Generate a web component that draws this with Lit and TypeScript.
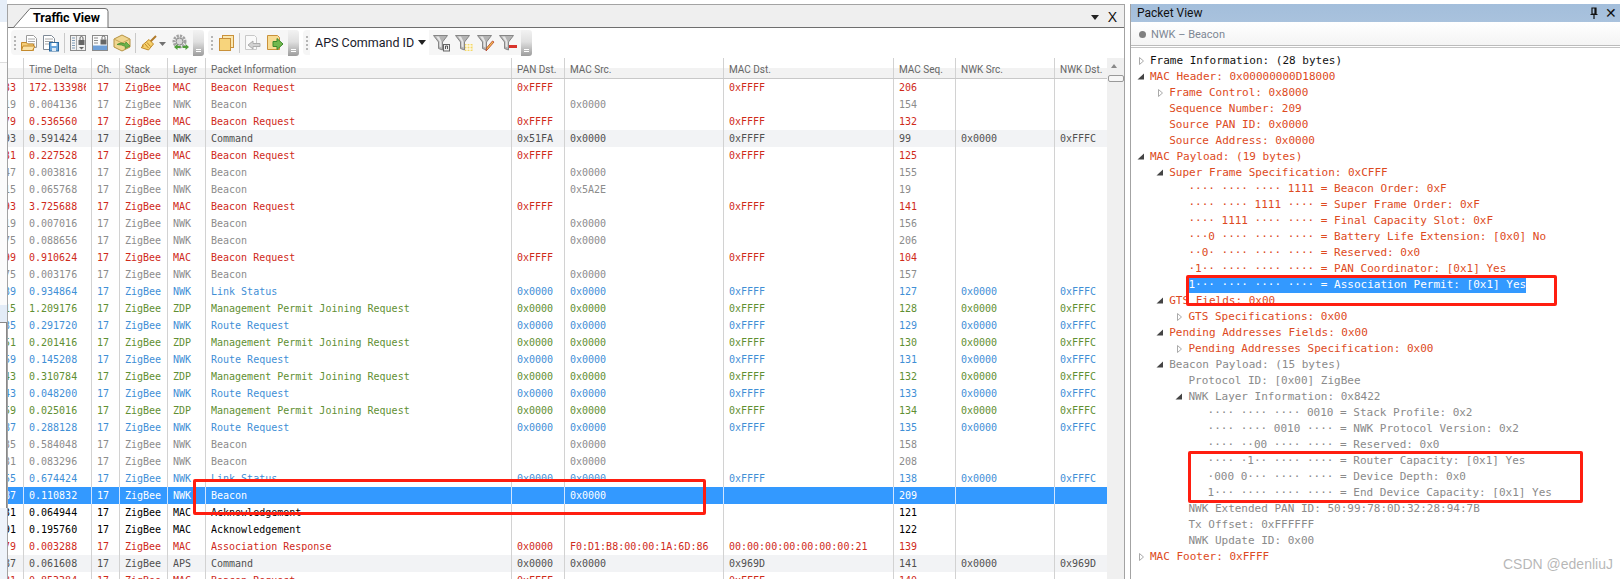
import { LitElement, html, css, svg } from "lit";
import { customElement } from "lit/decorators.js";

type Row = [string, string, string, string, string, string, string, string, string, string, string];

const BR = (n: string, t: string, seq: string): Row => [n, t, "MAC", "Beacon Request", "0xFFFF", "", "0xFFFF", seq, "", "", "r"];
const BC = (n: string, t: string, src: string, seq: string, k = "g"): Row => [n, t, "NWK", "Beacon", "", src, "", seq, "", "", k];
const NW = (n: string, t: string, info: string, seq: string): Row => [n, t, "NWK", info, "0x0000", "0x0000", "0xFFFF", seq, "0x0000", "0xFFFC", "b"];
const ZD = (n: string, t: string, seq: string): Row => [n, t, "ZDP", "Management Permit Joining Request", "0x0000", "0x0000", "0xFFFF", seq, "0x0000", "0xFFFC", "z"];
const AK = (n: string, t: string, seq: string): Row => [n, t, "MAC", "Acknowledgement", "", "", "", seq, "", "", "k"];

const ROWS: Row[] = [
  BR("33", "172.133986", "206"),
  BC("19", "0.004136", "0x0000", "154"),
  BR("79", "0.536560", "132"),
  ["93", "0.591424", "NWK", "Command", "0x51FA", "0x0000", "0xFFFF", "99", "0x0000", "0xFFFC", "d"],
  BR("31", "0.227528", "125"),
  BC("47", "0.003816", "0x0000", "155"),
  BC("15", "0.065768", "0x5A2E", "19"),
  BR("93", "3.725688", "141"),
  BC("19", "0.007016", "0x0000", "156"),
  BC("75", "0.088656", "0x0000", "206"),
  BR("99", "0.910624", "104"),
  BC("75", "0.003176", "0x0000", "157"),
  NW("39", "0.934864", "Link Status", "127"),
  ZD("15", "1.209176", "128"),
  NW("35", "0.291720", "Route Request", "129"),
  ZD("51", "0.201416", "130"),
  NW("59", "0.145208", "Route Request", "131"),
  ZD("43", "0.310784", "132"),
  NW("43", "0.048200", "Route Request", "133"),
  ZD("59", "0.025016", "134"),
  NW("87", "0.288128", "Route Request", "135"),
  BC("35", "0.584048", "0x0000", "158"),
  BC("31", "0.083296", "0x0000", "208"),
  NW("55", "0.674424", "Link Status", "138"),
  BC("87", "0.110832", "0x0000", "209", "s"),
  AK("31", "0.064944", "121"),
  AK("91", "0.195760", "122"),
  ["79", "0.003288", "MAC", "Association Response", "0x0000", "F0:D1:B8:00:00:1A:6D:86", "00:00:00:00:00:00:00:21", "139", "", "", "r"],
  ["87", "0.061608", "APS", "Command", "0x0000", "0x0000", "0x969D", "141", "0x0000", "0x969D", "d"],
  BR("81", "0.853384", "140"),
];

const HEAD = ["", "Time Delta", "Ch.", "Stack", "Layer", "Packet Information", "PAN Dst.", "MAC Src.", "MAC Dst.", "MAC Seq.", "NWK Src.", "NWK Dst."];

// [depth, expander (""|"c"|"e"), colour class, text]
type Line = [number, string, string, string];
const D = "\u00b7\u00b7\u00b7\u00b7";
const TREE: Line[] = [
  [0, "c", "k", "Frame Information: (28 bytes)"],
  [0, "e", "r", "MAC Header: 0x00000000D18000"],
  [1, "c", "r", "Frame Control: 0x8000"],
  [1, "", "r", "Sequence Number: 209"],
  [1, "", "r", "Source PAN ID: 0x0000"],
  [1, "", "r", "Source Address: 0x0000"],
  [0, "e", "r", "MAC Payload: (19 bytes)"],
  [1, "e", "r", "Super Frame Specification: 0xCFFF"],
  [2, "", "r", `${D} ${D} ${D} 1111 = Beacon Order: 0xF`],
  [2, "", "r", `${D} ${D} 1111 ${D} = Super Frame Order: 0xF`],
  [2, "", "r", `${D} 1111 ${D} ${D} = Final Capacity Slot: 0xF`],
  [2, "", "r", `\u00b7\u00b7\u00b70 ${D} ${D} ${D} = Battery Life Extension: [0x0] No`],
  [2, "", "r", `\u00b7\u00b70\u00b7 ${D} ${D} ${D} = Reserved: 0x0`],
  [2, "", "r", `\u00b71\u00b7\u00b7 ${D} ${D} ${D} = PAN Coordinator: [0x1] Yes`],
  [2, "", "s", `1\u00b7\u00b7\u00b7 ${D} ${D} ${D} = Association Permit: [0x1] Yes`],
  [1, "e", "r", "GTS Fields: 0x00"],
  [2, "c", "r", "GTS Specifications: 0x00"],
  [1, "e", "r", "Pending Addresses Fields: 0x00"],
  [2, "c", "r", "Pending Addresses Specification: 0x00"],
  [1, "e", "g", "Beacon Payload: (15 bytes)"],
  [2, "", "g", "Protocol ID: [0x00] ZigBee"],
  [2, "e", "g", "NWK Layer Information: 0x8422"],
  [3, "", "g", `${D} ${D} ${D} 0010 = Stack Profile: 0x2`],
  [3, "", "g", `${D} ${D} 0010 ${D} = NWK Protocol Version: 0x2`],
  [3, "", "g", `${D} \u00b7\u00b700 ${D} ${D} = Reserved: 0x0`],
  [3, "", "g", `${D} \u00b71\u00b7\u00b7 ${D} ${D} = Router Capacity: [0x1] Yes`],
  [3, "", "g", `\u00b7000 0\u00b7\u00b7\u00b7 ${D} ${D} = Device Depth: 0x0`],
  [3, "", "g", `1\u00b7\u00b7\u00b7 ${D} ${D} ${D} = End Device Capacity: [0x1] Yes`],
  [2, "", "g", "NWK Extended PAN ID: 50:99:78:0D:32:28:94:7B"],
  [2, "", "g", "Tx Offset: 0xFFFFFF"],
  [2, "", "g", "NWK Update ID: 0x00"],
  [0, "c", "r", "MAC Footer: 0xFFFF"],
];

const icon = (body: unknown, w = 18) =>
  html`<svg class="ic" width=${w} height="18" viewBox="0 0 ${w} 18">${body}</svg>`;

const doc = (x: number, y: number, w: number, h: number, c = "#8a8a8a") => svg`
  <path d="M${x + 0.5} ${y + 0.5}h${w - 4}l3 3v${h - 3}h-${w - 1}z" fill="#fff" stroke=${c}/>
  <path d="M${x + 2} ${y + 4}h${w - 4}M${x + 2} ${y + 6.5}h${w - 4}M${x + 2} ${y + 9}h${w - 4}" stroke="#a8a8a8"/>`;

const lock = (x: number, y: number) => svg`
  <rect x=${x} y=${y + 4} width="6" height="5" fill="#666"/>
  <path d="M${x + 1.5} ${y + 4}v-2a1.5 1.5 0 0 1 3 0v2" fill="none" stroke="#666"/>`;

const funnelBody = svg`<path d="M0.5 1.5h14l-5 6.5v8l-4-1.5v-6.5z" fill="#b4b4b4" stroke="#868686"/><path d="M3 2.5h3l2.5 5v6l-2-1v-5z" fill="#e6e6e6"/>`;

const ICONS = {
  open: icon(svg`${doc(6, 1, 11, 12, "#9a9a9a")}
    <path d="M1.5 8.5h5l1 1.5h6v6.5h-12z" fill="#f4cd78" stroke="#c48a2c"/>
    <path d="M1.5 16.5l1.5-4.5h12l-2.5 4.5z" fill="#fbe2a6" stroke="#c48a2c"/>`),
  save: icon(svg`${doc(1, 1, 12, 14, "#7f8a96")}
    <rect x="7.5" y="8.5" width="9" height="8.5" fill="#6aa6dc" stroke="#2e6a9f"/>
    <rect x="9.5" y="9" width="5" height="3" fill="#fff"/>
    <rect x="10" y="14" width="4" height="3" fill="#dbe8f4"/>`),
  cols: icon(svg`<rect x="1.5" y="1.5" width="15" height="15" fill="#f2f2f2" stroke="#8a8a8a"/>
    <path d="M3 4h3M3 6.5h3M3 9h3M3 11.5h3M3 14h3" stroke="#7f9ab5"/>
    <path d="M7.5 2v14" stroke="#aaa"/><path d="M10 13h5l-2.5 2.5z" fill="#666"/>${lock(9.5, 2)}`),
  head: icon(svg`<rect x="1.5" y="1.5" width="15" height="15" fill="#fbfbfb" stroke="#8a8a8a"/>
    <path d="M3 4h4M3 6.5h4M3 9h4" stroke="#8a8a8a"/>
    <rect x="2" y="11.5" width="14" height="4.5" fill="#6e9fd8"/>${lock(9.5, 1.5)}`),
  pkg: icon(svg`<path d="M9 1l8 4v8l-8 4-8-4v-8z" fill="#f0d690" stroke="#b59243"/>
    <path d="M1 5l8 4 8-4" fill="none" stroke="#c9a658"/>
    <path d="M4 10.5q4-3 8-.5l1-2 4 4-5 2.5 .5-2q-4-2-8-2z" fill="#6cb24a" stroke="#3c8a2c" stroke-width=".7"/>`),
  brush: icon(svg`<path d="M16 2L10 8" stroke="#b07a2a" stroke-width="2"/>
    <path d="M9 5.5l4.5 4.5-5 6-7.5-2.5 2.5-1.5-1.5-.5z" fill="#f5cf6a" stroke="#c08a2a"/>
    <path d="M5 10l3.5 4M7 8.5l3.5 4" stroke="#c08a2a"/>
    <path d="M19 8h7l-3.5 4z" fill="#707070"/>`, 27),
  gear: icon(svg`<circle cx="8.5" cy="7.5" r="5.5" fill="none" stroke="#a2a2a2" stroke-width="3" stroke-dasharray="2.2 1"/>
    <circle cx="8.5" cy="7.5" r="3.5" fill="#d8d8d8" stroke="#8a8a8a"/>
    <path d="M3 13l3.5-3v2h3v2h-3v2z" fill="#4e9e3a"/>
    <path d="M18 13l-3.5-3v2h-3v2h3v2z" fill="#4e9e3a"/>`),
  copy: icon(svg`<rect x="5.5" y="1.5" width="11" height="12" fill="#fbe7b0" stroke="#c9913a"/>
    <rect x="2.5" y="4.5" width="11" height="12" fill="#f7d47c" stroke="#c9913a"/>`),
  back: icon(svg`<path d="M1.5 1.5h9l2 2v12h-11z" fill="#fafafa" stroke="#c8c8c8"/><path d="M4 11l5-4v2.5h7v3h-7v2.5z" fill="#d2d2d2" stroke="#acacac"/>`),
  next: icon(svg`<path d="M1.5 1.5h10l2 2v12h-12z" fill="#f8dc93" stroke="#c9913a"/>
    <path d="M7 7.5h4v-3l6 5.5-6 5.5v-3h-4z" fill="#72b84e" stroke="#3c8a2c"/>`),
  f1: icon(svg`${funnelBody}<rect x="10.5" y="10.5" width="6" height="6.5" fill="#eee" stroke="#666"/><path d="M12.5 15v-3h2v3" fill="none" stroke="#555"/>`),
  f2: icon(svg`${funnelBody}<rect x="10" y="10" width="7.5" height="7" fill="#f4d867"/><path d="M10 12h7.5M10 15h7.5M12 10v7M15 10v7" stroke="#fff"/>`),
  f3: icon(svg`${funnelBody}<path d="M17 8l-6 7-2 2 .5-3 6-7z" fill="#f2c14e" stroke="#b23b2a" stroke-width=".8"/>`),
  f4: icon(svg`${funnelBody}<rect x="10" y="11" width="8" height="3" fill="#d8342c"/>`),
};

const over = html`<div class="over"><i></i></div>`;

@customElement("app-root")
export class AppRoot extends LitElement {
  static styles = css`
    :host {
      display: block;
      position: relative;
      width: 1620px;
      height: 579px;
      overflow: hidden;
      background: #fff;
      font-family: Roboto, "Noto Sans", sans-serif;
    }
    .page { display: flex; height: 579px; }

    .side { width: 7px; display: flex; flex-direction: column; flex: none; }
    .side div { flex: none; }
    .s1 { height: 22px; background: #e6eef8; }
    .s2 { height: 40px; background: #fff; border-bottom: 1px solid #ddd; }
    .s3 { height: 242px; background: #fbfbfb; }
    .s4 { height: 17px; background: #e3ecf7; }
    .s5 { height: 186px; background: #fff; border-top: 1px solid #888; border-right: 1px solid #888; box-sizing: border-box; }
    .s6 { flex: 1 !important; background: #eef3fa; }

    .traffic {
      width: 1118px; flex: none; margin-top: 4px; box-sizing: border-box;
      border-top: 1px solid #a3a3a3; border-left: 1px solid #a3a3a3; border-right: 1px solid #a3a3a3;
      display: flex; flex-direction: column; overflow: hidden; height: 575px;
    }
    .tabbar {
      height: 23px; flex: none; box-sizing: border-box; background: #efefef;
      border-bottom: 1px solid #6e6e6e; display: flex; align-items: flex-end; position: relative;
    }
    .tab {
      position: relative; margin-left: 5px; margin-bottom: -1px; width: 96px; height: 20px;
      box-sizing: border-box; padding-left: 20px; font-weight: 700; font-size: 12.5px; line-height: 19px; color: #000;
    }
    .tab svg { position: absolute; left: 0; top: 0; }
    .tab span { position: relative; }
    .winbtns { position: absolute; right: 7px; top: 2px; display: flex; gap: 9px; align-items: center; height: 20px; }
    .drop { width: 0; height: 0; flex: none; border-left: 4px solid transparent; border-right: 4px solid transparent; border-top: 5px solid #222; }
    .x { font-family: "Liberation Sans", sans-serif; font-size: 14px; color: #111; line-height: 20px; }

    .toolbar { height: 30px; flex: none; display: flex; gap: 4px; padding: 2px 0 0 3px; box-sizing: border-box; background: #fff; }
    .grp { display: flex; height: 26px; }
    .inner {
      display: flex; align-items: center; gap: 4px; padding: 0 4px 0 3px;
      background: #f6f6f6; border-radius: 4px 0 0 4px; height: 25px;
    }
    .grip { width: 0; height: 14px; border-left: 2px dotted #b5b5b5; }
    .sep { width: 1px; height: 20px; background: #c9c9c9; }
    .ic { display: block; flex: none; }
    .over {
      width: 11px; height: 26px; border-radius: 0 3px 3px 0; position: relative;
      background: linear-gradient(#f2f2f2, #e0e0e0 45%, #9c9c9c);
    }
    .over i { position: absolute; left: 3px; bottom: 4px; width: 5px; height: 3px; border-top: 1px solid #fff; border-bottom: 1px solid #fff; box-sizing: border-box; }
    .combo {
      width: 119px; height: 25px; margin-left: -2px; background: #fff; box-sizing: border-box;
      display: flex; align-items: center; justify-content: space-between; padding: 0 3px 0 5px;
      font-size: 12.5px; color: #1a1a2a; white-space: nowrap;
    }

    .gridwrap { flex: 1; display: flex; min-height: 0; }
    .grid { width: 1099px; flex: none; overflow: hidden; }
    .row {
      display: grid; height: 17px;
      grid-template-columns: 16px 68px 28px 48px 38px 306px 53px 159px 170px 62px 99px 52px;
      font: 10px/17px "DejaVu Sans Mono", "Liberation Mono", monospace;
    }
    .cell { border-right: 1px solid #d2d2d2; padding: 0 5px; overflow: hidden; white-space: nowrap; box-sizing: border-box; }
    .cell:last-child { border-right: none; padding-right: 0; }
    .cell span { display: block; overflow: hidden; }
    .cell.num { padding: 0 7px 0 0; display: flex; justify-content: flex-end; }
    .cell.num span { overflow: visible; }
    .head {
      height: 21px; box-sizing: border-box; border-bottom: 1px solid #c8c8c8;
      background: linear-gradient(#fff 50%, #f2f2f2 50%);
      font: 10px/24px Roboto, "Noto Sans", sans-serif; color: #666;
    }
    .r { color: #cf2a1a; }
    .g { color: #8c8c8c; }
    .d { color: #505050; background: #f2f3f5; }
    .b { color: #3f8fd6; }
    .z { color: #5f8f32; }
    .k { color: #000; }
    .s { color: #fff; background: #3399ff; }
    .s .cell { border-right-color: #cfe5ff; }
    .scroll { width: 17px; flex: none; background: #f0f0f0; position: relative; }
    .up { position: absolute; left: 4px; top: 6px; width: 0; height: 0; border-left: 3px solid transparent; border-right: 3px solid transparent; border-bottom: 4px solid #888; }
    .thumb { position: absolute; left: 1px; top: 17px; width: 14px; height: 5px; background: #f6f6f6; border: 1px solid #999; border-radius: 2px; }

    .packet { flex: 1; margin: 4px 0 0 5px; border-left: 1px solid #a3a3a3; display: flex; flex-direction: column; height: 575px; }
    .ptitle {
      height: 18px; flex: none; background: linear-gradient(#a3bedb, #a9c2dd);
      display: flex; align-items: center; justify-content: space-between; padding: 0 3px 0 6px;
      font-size: 12px; color: #111;
    }
    .pbtn { display: flex; gap: 6px; align-items: center; }
    .psub {
      height: 24px; flex: none; box-sizing: border-box; border-bottom: 1px solid #bbb;
      background: linear-gradient(#fff, #f4f4f4); display: flex; align-items: center; gap: 5px;
      padding: 1px 0 0 8px; font-size: 11px; color: #7d8794;
    }
    .dot { width: 7px; height: 7px; border-radius: 50%; background: #808080; }
    .tree {
      flex: 1; margin-top: 1px; border-top: 1px solid #c4c4c4; padding-top: 5px; overflow: hidden;
      font: 11px/16px "DejaVu Sans Mono", "Liberation Mono", monospace;
    }
    .line { height: 16px; display: flex; align-items: center; }
    .t { white-space: pre; }
    .exp { width: 13px; height: 16px; flex: none; display: flex; align-items: center; }
    .line.k { color: #111; }
    .line.r { color: #dd4a22; }
    .line.g { color: #8a8a8a; }
    .line.s { background: none; color: #fff; }
    .line.s .t { background: #3399ff; }

    .mark { position: absolute; border: 3px solid #ff1e10; border-radius: 2px; box-sizing: border-box; }
    .m1 { left: 193px; top: 479px; width: 513px; height: 36px; }
    .m2 { left: 1186px; top: 275px; width: 371px; height: 31px; }
    .m3 { left: 1188px; top: 451px; width: 395px; height: 52px; }
    .wm { position: absolute; left: 1503px; top: 556px; font: 14px/16px "Liberation Sans", sans-serif; color: rgba(110, 110, 110, 0.5); }
  `;

  private cells(r: Row) {
    const vals = [r[1], "17", "ZigBee", r[2], r[3], r[4], r[5], r[6], r[7], r[8], r[9]];
    return vals.map((v) => html`<div class="cell"><span>${v}</span></div>`);
  }

  private exp(kind: string) {
    if (kind === "c")
      return html`<svg width="13" height="16" viewBox="0 0 13 16"><path d="M2.5 4.5v7l4-3.5z" fill="#fff" stroke="#aaa"/></svg>`;
    if (kind === "e")
      return html`<svg width="13" height="16" viewBox="0 0 13 16"><path d="M7 4.5v6h-6.5z" fill="#444"/></svg>`;
    return html``;
  }

  render() {
    return html`
      <div class="page">
        <div class="side">
          <div class="s1"></div><div class="s2"></div><div class="s3"></div>
          <div class="s4"></div><div class="s5"></div><div class="s6"></div>
        </div>
        <div class="traffic">
          <div class="tabbar">
            <div class="tab">
              <svg width="96" height="20" viewBox="0 0 96 20"><path d="M0 20L17 .5H92q3 0 3 3V20z" fill="#fff" stroke="#6e6e6e"/></svg>
              <span>Traffic View</span>
            </div>
            <div class="winbtns"><div class="drop"></div><div class="x">X</div></div>
          </div>
          <div class="toolbar">
            <div class="grp">
              <div class="inner">
                <div class="grip"></div>${ICONS.open}${ICONS.save}<div class="sep"></div>
                ${ICONS.cols}${ICONS.head}${ICONS.pkg}<div class="sep"></div>${ICONS.brush}${ICONS.gear}
              </div>${over}
            </div>
            <div class="grp">
              <div class="inner">
                <div class="grip"></div>${ICONS.copy}<div class="sep"></div>${ICONS.back}${ICONS.next}
              </div>${over}
            </div>
            <div class="grp">
              <div class="inner">
                <div class="grip"></div>
                <div class="combo"><span>APS Command ID</span><div class="drop"></div></div>
                ${ICONS.f1}${ICONS.f2}${ICONS.f3}${ICONS.f4}
              </div>${over}
            </div>
          </div>
          <div class="gridwrap">
            <div class="grid">
              <div class="row head">${HEAD.map((h) => html`<div class="cell"><span>${h}</span></div>`)}</div>
              ${ROWS.map(
                (r) => html`<div class="row ${r[10]}">
                  <div class="cell num"><span>${r[0]}</span></div>
                  ${this.cells(r)}
                </div>`
              )}
            </div>
            <div class="scroll"><div class="up"></div><div class="thumb"></div></div>
          </div>
        </div>
        <div class="packet">
          <div class="ptitle">
            <span>Packet View</span>
            <div class="pbtn">
              <svg width="10" height="12" viewBox="0 0 10 12"><path d="M3 1h4v6H3zM1.5 7.5h7M5 8v4M6 1v6" fill="none" stroke="#111" stroke-width="1.2"/></svg>
              <span class="x">✕</span>
            </div>
          </div>
          <div class="psub"><div class="dot"></div><span>NWK – Beacon</span></div>
          <div class="tree">
            ${TREE.map(
              ([d, e, c, t]) => html`<div class="line ${c}" style="padding-left:${6 + d * 19.2}px"><div class="exp">${this.exp(e)}</div><span class="t">${t}</span></div>`
            )}
          </div>
        </div>
      </div>
      <div class="mark m1"></div>
      <div class="mark m2"></div>
      <div class="mark m3"></div>
      <div class="wm">CSDN @edenliuJ</div>
    `;
  }
}
